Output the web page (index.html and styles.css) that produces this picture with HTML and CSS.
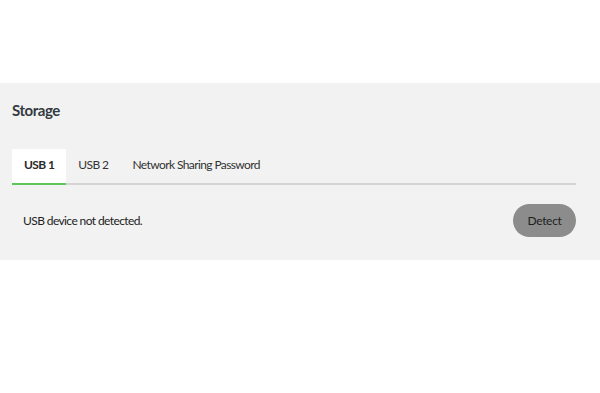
FILE: index.html
```html
<!DOCTYPE html>
<html>
<head>
<meta charset="utf-8">
<link rel="stylesheet" href="styles.css">
</head>
<body>
<div class="top-space"></div>
<section class="panel">
  <h2 class="title">Storage</h2>
  <div class="tabs">
    <div class="tab active">USB 1</div>
    <div class="tab">USB 2</div>
    <div class="tab">Network Sharing Password</div>
  </div>
  <div class="row">
    <span class="msg">USB device not detected.</span>
    <button class="btn">Detect</button>
  </div>
</section>
</body>
</html>
```

FILE: styles.css
```css
html, body {
  margin: 0;
  padding: 0;
  background: #ffffff;
  font-family: Lato, "Open Sans", sans-serif;
  color: #2b2b2b;
}
.top-space {
  height: 83px;
}
.panel {
  background: #f2f2f2;
  height: 177px;
  padding: 0 24px 0 12px;
  box-sizing: border-box;
  display: flex;
  flex-direction: column;
}
.title {
  margin: 0;
  padding-top: 18px;
  font-size: 15px;
  font-weight: 700;
  line-height: 18px;
  letter-spacing: -0.45px;
  color: #333a40;
  height: 48px;
  box-sizing: border-box;
}
.tabs {
  display: flex;
  border-bottom: 2px solid #d4d4d4;
  margin-top: 18px;
}
.tab {
  padding: 0 12px;
  height: 34px;
  line-height: 32px;
  font-size: 12px;
  letter-spacing: -0.6px;
  color: #333;
  margin-bottom: -2px;
  border-bottom: 2px solid transparent;
}
.tab.active {
  background: #ffffff;
  border-bottom-color: #5cc85c;
  padding: 0 12px 0 12px;
  font-weight: 700;
  color: #2a2a2a;
}
.row {
  display: flex;
  align-items: center;
  justify-content: space-between;
  padding-left: 11px;
  margin-top: 19px;
}
.msg {
  font-size: 12px;
  letter-spacing: -0.6px;
  color: #222;
}
.btn {
  width: 63px;
  height: 33px;
  border: none;
  border-radius: 17px;
  background: #8c8c8c;
  color: #1e1e1e;
  font-family: Lato, "Open Sans", sans-serif;
  font-size: 12px;
  letter-spacing: -0.3px;
  padding: 0;
}
```
